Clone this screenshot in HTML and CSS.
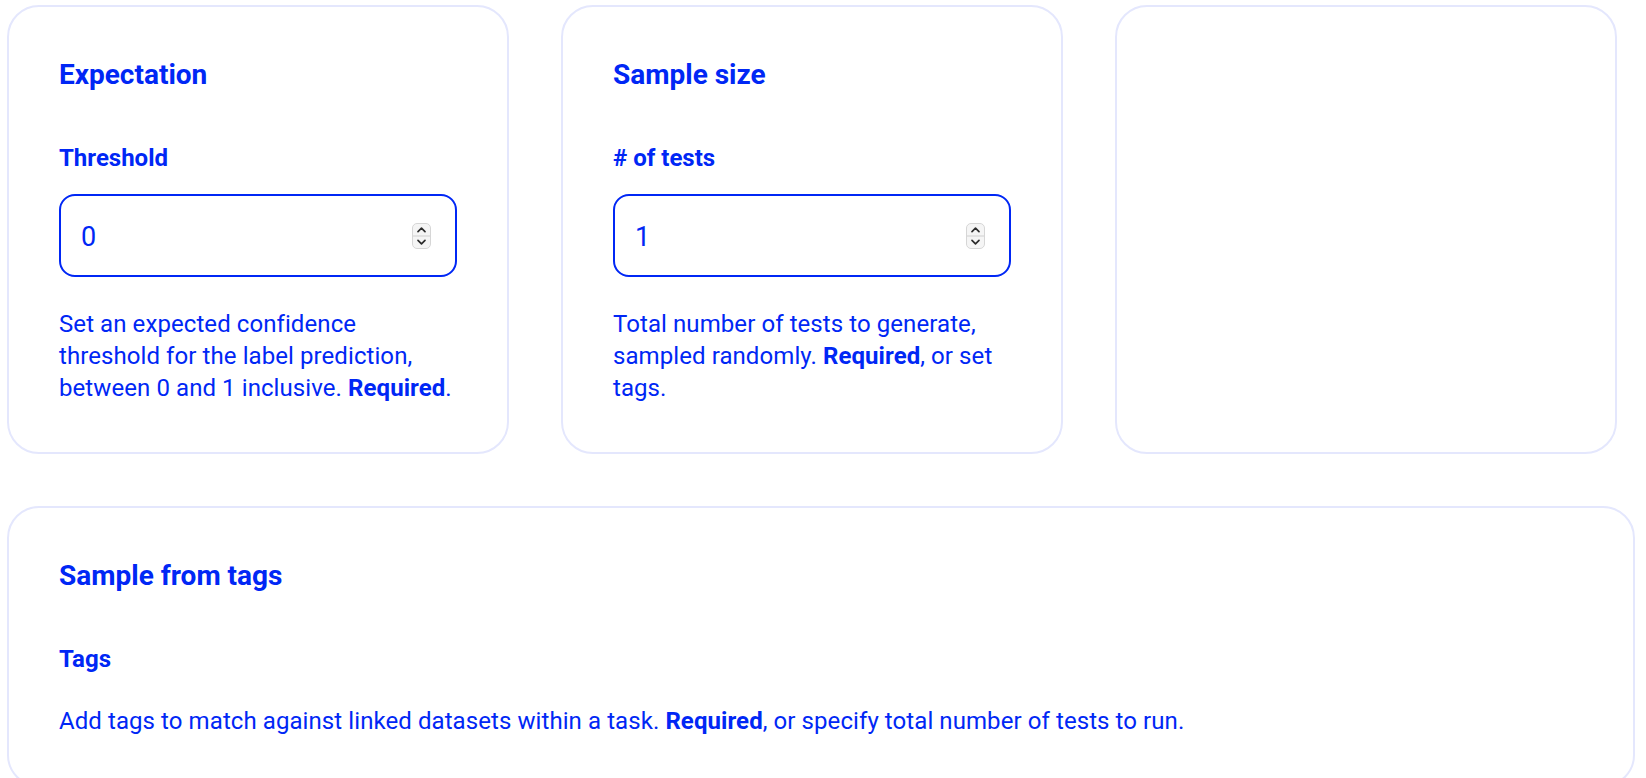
FILE: index.html
```html
<!DOCTYPE html>
<html lang="en">
<head>
<meta charset="utf-8">
<title>Test settings</title>
<link rel="stylesheet" href="styles.css">
</head>
<body>
<main class="page">
  <section class="row">
    <div class="card">
      <h2 class="card-title">Expectation</h2>
      <div class="field">
        <label class="field-label" for="threshold">Threshold</label>
        <div class="input-wrap">
          <input class="field-input" id="threshold" type="number" value="0" min="0" max="1" step="0.01">
          <span class="spinner" aria-hidden="true">
            <svg width="19" height="26" viewBox="0 0 19 26">
              <rect x="0.5" y="0.5" width="18" height="25" rx="4.5" fill="#f5f5f5" stroke="#d6d6d6" stroke-width="1"/>
              <line x1="1" y1="13" x2="18" y2="13" stroke="#cfcfcf" stroke-width="1"/>
              <polyline points="6,8.6 9.5,5.2 13,8.6" fill="none" stroke="#2b2b2b" stroke-width="1.7" stroke-linecap="round" stroke-linejoin="round"/>
              <polyline points="6,17.4 9.5,20.8 13,17.4" fill="none" stroke="#2b2b2b" stroke-width="1.7" stroke-linecap="round" stroke-linejoin="round"/>
            </svg>
          </span>
        </div>
        <p class="field-help">Set an expected confidence threshold for the label prediction, between 0 and 1 inclusive. <strong>Required</strong>.</p>
      </div>
    </div>
    <div class="card">
      <h2 class="card-title">Sample size</h2>
      <div class="field">
        <label class="field-label" for="tests"># of tests</label>
        <div class="input-wrap">
          <input class="field-input" id="tests" type="number" value="1" min="1">
          <span class="spinner" aria-hidden="true">
            <svg width="19" height="26" viewBox="0 0 19 26">
              <rect x="0.5" y="0.5" width="18" height="25" rx="4.5" fill="#f5f5f5" stroke="#d6d6d6" stroke-width="1"/>
              <line x1="1" y1="13" x2="18" y2="13" stroke="#cfcfcf" stroke-width="1"/>
              <polyline points="6,8.6 9.5,5.2 13,8.6" fill="none" stroke="#2b2b2b" stroke-width="1.7" stroke-linecap="round" stroke-linejoin="round"/>
              <polyline points="6,17.4 9.5,20.8 13,17.4" fill="none" stroke="#2b2b2b" stroke-width="1.7" stroke-linecap="round" stroke-linejoin="round"/>
            </svg>
          </span>
        </div>
        <p class="field-help">Total number of tests to generate, sampled randomly. <strong>Required</strong>, or set tags.</p>
      </div>
    </div>
    <div class="card"></div>
  </section>
  <section class="card card-wide">
    <h2 class="card-title">Sample from tags</h2>
    <div class="field">
      <label class="field-label">Tags</label>
      <p class="field-help">Add tags to match against linked datasets within a task. <strong>Required</strong>, or specify total number of tests to run.</p>
    </div>
  </section>
</main>
</body>
</html>
```

FILE: styles.css
```css
* {
  box-sizing: border-box;
}

html, body {
  margin: 0;
  background: #ffffff;
}

body {
  font-family: Roboto, "Liberation Sans", Arial, sans-serif;
  color: #0027f5;
}

.page {
  padding: 5px 11px 0 7px;
  display: flex;
  flex-direction: column;
  gap: 52px;
}

.row {
  display: grid;
  grid-template-columns: repeat(3, 502px);
  column-gap: 52px;
}

.card {
  border: 2px solid #e4e7fd;
  border-radius: 32px;
  padding: 50px 50px 48px 50px;
  background: #fff;
}

.card-title {
  margin: 0 0 51px 0;
  font-size: 28px;
  line-height: 35px;
  font-weight: 700;
}

.field {
  display: flex;
  flex-direction: column;
  align-items: flex-start;
}

.field-label {
  font-size: 24px;
  line-height: 30px;
  font-weight: 700;
}

.input-wrap {
  position: relative;
  width: 100%;
  margin-top: 21px;
}

.field-input {
  display: block;
  width: 100%;
  height: 83px;
  border: 2px solid #0027f5;
  border-radius: 16px;
  padding: 28px 50px 25px 20px;
  font-family: Roboto, "Liberation Sans", Arial, sans-serif;
  font-size: 27px;
  line-height: 26px;
  color: #0027f5;
  background: #fff;
  outline: none;
  -moz-appearance: textfield;
}

.field-input::-webkit-inner-spin-button,
.field-input::-webkit-outer-spin-button {
  -webkit-appearance: none;
  margin: 0;
}

.spinner {
  position: absolute;
  top: 29px;
  right: 26px;
  width: 19px;
  height: 26px;
  display: block;
  pointer-events: none;
}

.spinner svg {
  display: block;
}

.field-help {
  margin: 31px 0 0 0;
  font-size: 24px;
  line-height: 32px;
  font-weight: 400;
  letter-spacing: 0.08px;
}

.field-help strong {
  font-weight: 700;
}
```
